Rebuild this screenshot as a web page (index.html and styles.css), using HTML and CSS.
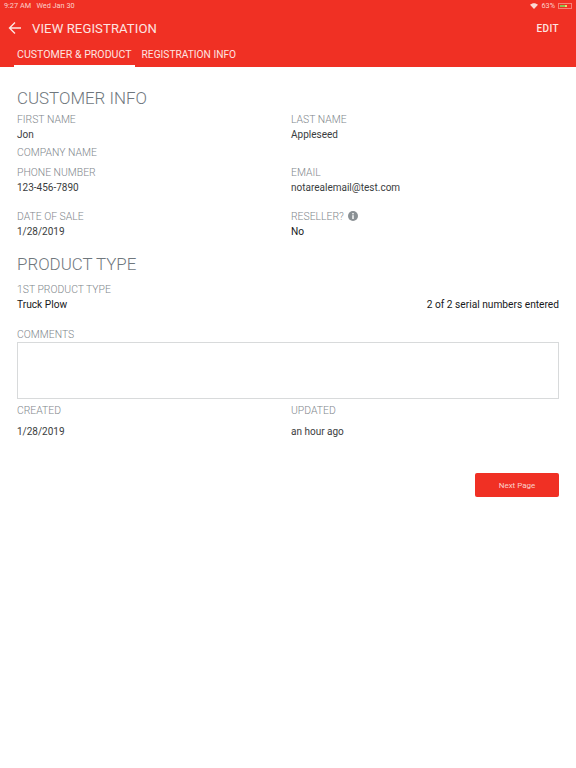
FILE: index.html
```html
<!DOCTYPE html>
<html>
<head>
<meta charset="utf-8">
<link rel="stylesheet" href="styles.css">
</head>
<body>
    <div class="top">
        <div class="status">
            <span>9:27 AM&nbsp;&nbsp; Wed Jan 30</span>
            <span class="status-right">
                <svg class="wifi" viewBox="0 0 12 9"><path d="M6 9 L0 2.6 C3.4 -0.6 8.6 -0.6 12 2.6 Z" fill="#fbd9d5"/></svg>
                <span>63%</span>
                <span class="battery"><span class="battery-fill"></span></span>
            </span>
        </div>
        <div class="toolbar">
            <svg class="back" viewBox="0 0 14 14"><path d="M13 7 H2 M7 1.5 L1.5 7 L7 12.5" fill="none" stroke="#fde4e1" stroke-width="1.4"/></svg>
            <span class="title">VIEW REGISTRATION</span>
            <span class="edit">EDIT</span>
        </div>
        <div class="tabs">
            <div class="tab tab-active">CUSTOMER &amp; PRODUCT</div>
            <div class="tab">REGISTRATION INFO</div>
        </div>
    </div>

    <div class="content">
        <h2 class="heading">CUSTOMER INFO</h2>
        <div class="row row-name">
            <div class="field"><div class="label">FIRST NAME</div><div class="value">Jon</div></div>
            <div class="field"><div class="label">LAST NAME</div><div class="value">Appleseed</div></div>
        </div>
        <div class="label company">COMPANY NAME</div>
        <div class="row row-phone">
            <div class="field"><div class="label">PHONE NUMBER</div><div class="value">123-456-7890</div></div>
            <div class="field"><div class="label">EMAIL</div><div class="value">notarealemail@test.com</div></div>
        </div>
        <div class="row row-date">
            <div class="field"><div class="label">DATE OF SALE</div><div class="value">1/28/2019</div></div>
            <div class="field">
                <div class="label">RESELLER?
                    <svg class="info" viewBox="0 0 10 10"><circle cx="5" cy="5" r="5" fill="#8a9094"/><rect x="4.3" y="4.2" width="1.4" height="3.8" fill="#fff"/><rect x="4.3" y="2" width="1.4" height="1.4" fill="#fff"/></svg>
                </div>
                <div class="value value-dark">No</div>
            </div>
        </div>

        <h2 class="heading heading-product">PRODUCT TYPE</h2>
        <div class="label product-label">1ST PRODUCT TYPE</div>
        <div class="product-line">
            <span class="value-dark">Truck Plow</span>
            <span class="value-dark">2 of 2 serial numbers entered</span>
        </div>

        <div class="label comments-label">COMMENTS</div>
        <div class="comments"></div>

        <div class="row row-created">
            <div class="field"><div class="label">CREATED</div><div class="value value-gap">1/28/2019</div></div>
            <div class="field"><div class="label">UPDATED</div><div class="value value-gap">an hour ago</div></div>
        </div>

        <div class="actions">
            <button class="next">Next Page</button>
        </div>
    </div>
</body>
</html>
```

FILE: styles.css
```css
* {
    box-sizing: border-box;
}
body {
    margin: 0;
    background: #fff;
    font-family: Roboto, "Liberation Sans", sans-serif;
    color: #3a3d40;
}
.top {
    height: 67px;
    background: #f03024;
    color: #fde4e1;
}
.status {
    display: flex;
    justify-content: space-between;
    align-items: center;
    height: 11px;
    padding: 0 4px;
    font-size: 7.3px;
    color: #fbd0cb;
}
.status-right {
    display: flex;
    align-items: center;
    gap: 3px;
}
.wifi {
    width: 8px;
    height: 6px;
}
.battery {
    display: block;
    width: 14px;
    height: 6px;
    padding: 1px;
    border: 1px solid #f77f76;
}
.battery-fill {
    display: block;
    width: 7px;
    height: 100%;
    background: linear-gradient(to right, #8cc152 70%, #e8e06a 70%);
}
.toolbar {
    display: flex;
    align-items: center;
    height: 34px;
    padding: 0 17px 0 8px;
}
.back {
    width: 14px;
    height: 14px;
}
.title {
    margin-left: 10px;
    font-size: 13.1px;
    letter-spacing: 0.1px;
}
.edit {
    margin-left: auto;
    font-size: 10px;
    font-weight: 500;
    letter-spacing: 0.4px;
}
.tabs {
    display: flex;
    height: 22px;
    padding-left: 14px;
}
.tab {
    padding: 3px 3px 0;
    font-size: 10.2px;
    line-height: 14px;
    white-space: nowrap;
}
.tab-active {
    margin-right: 4px;
    font-size: 10.6px;
    border-bottom: 2px solid #fff;
}
.content {
    padding: 0 17px;
}
.heading {
    margin: 0;
    padding-top: 21px;
    font-size: 16.9px;
    line-height: 20px;
    font-weight: 300;
    color: #6f777d;
}
.heading-product {
    padding-top: 15px;
}
.row {
    display: grid;
    grid-template-columns: 274px 1fr;
}
.label {
    font-size: 10.4px;
    line-height: 14px;
    font-weight: 300;
    color: #7f878c;
}
.value {
    margin-top: 1px;
    font-size: 10px;
    line-height: 14px;
}
.value-dark {
    color: #17191b;
    font-size: 10.2px;
}
.value-gap {
    margin-top: 7px;
}
.info {
    width: 10px;
    height: 10px;
    margin-left: 2px;
    vertical-align: -1px;
}
.row-name {
    margin-top: 5px;
}
.company {
    margin-top: 4px;
}
.row-phone {
    margin-top: 6px;
}
.row-date {
    margin-top: 15px;
}
.product-label {
    margin-top: 9px;
}
.product-line {
    display: flex;
    justify-content: space-between;
    margin-top: 1px;
    line-height: 14px;
}
.comments-label {
    margin-top: 16px;
}
.comments {
    height: 57px;
    border: 1px solid #d8dadb;
}
.row-created {
    margin-top: 5px;
}
.actions {
    display: flex;
    justify-content: flex-end;
    margin-top: 34px;
}
.next {
    width: 84px;
    height: 24px;
    border: 0;
    border-radius: 2px;
    background: #f03024;
    color: #fbd0cb;
    font-family: Roboto, "Liberation Sans", sans-serif;
    font-size: 8px;
}
```
